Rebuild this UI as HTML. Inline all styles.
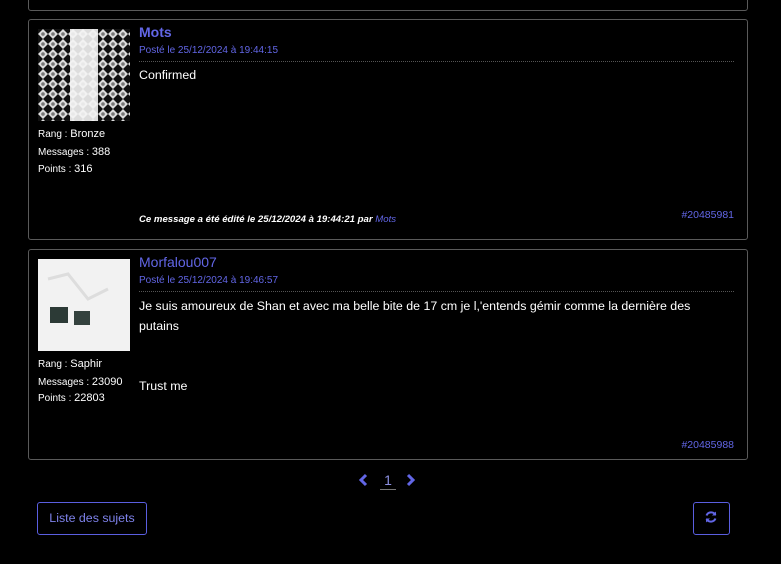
<!DOCTYPE html>
<html><head><meta charset="utf-8"><style>
body{margin:0;width:781px;height:564px;background:#000;font-family:"Liberation Sans",Arial,sans-serif;color:#fff;position:relative;overflow:hidden}
.box{position:absolute;left:28px;width:718px;border:1px solid #5a5a5a;border-radius:3px}
.a{position:absolute;color:#6266e6}
.t{position:absolute;white-space:nowrap}
.av{position:absolute;left:9px;width:92px;height:92px}
.st{position:absolute;left:9px;font-size:10px;line-height:12px}
.st b{font-weight:normal;font-size:11px}
.dot{position:absolute;left:110px;right:13px;border-top:1px dotted #555}
</style></head><body>
<div class="box" style="top:-5px;height:14px"></div>

<div class="box" style="top:19px;height:219px">
 <svg class="av" style="top:9px" viewBox="0 0 92 92">
  <defs><pattern id="p" width="10" height="10" patternUnits="userSpaceOnUse"><rect width="10" height="10" fill="#111"/><path d="M5 0 L10 5 L5 10 L0 5Z" fill="#ddd"/><circle cx="5" cy="5" r="1.8" fill="#777"/></pattern></defs>
  <rect width="92" height="92" fill="url(#p)"/><rect x="32" width="28" height="92" fill="#f4f4f4" opacity="0.9"/>
 </svg>
 <div class="a t" style="left:110px;top:4px;font-size:14px;font-weight:bold">Mots</div>
 <div class="a t" style="left:110px;top:25px;font-size:10px">Posté le 25/12/2024 à 19:44:15</div>
 <div class="dot" style="top:41px"></div>
 <div class="t" style="left:110px;top:48px;font-size:12.4px">Confirmed</div>
 <div class="st" style="top:108px">Rang : <b>Bronze</b></div>
 <div class="st" style="top:126px">Messages : <b>388</b></div>
 <div class="st" style="top:143px">Points : <b>316</b></div>
 <div class="t" style="left:110px;top:194px;font-size:9.6px;font-style:italic;font-weight:bold">Ce message a été édité le 25/12/2024 à 19:44:21 par <span style="color:#6266e6;font-weight:normal">Mots</span></div>
 <div class="a t" style="right:13px;top:189px;font-size:10.5px">#20485981</div>
</div>

<div class="box" style="top:249px;height:209px">
 <svg class="av" style="top:9px" viewBox="0 0 92 92">
  <rect width="92" height="92" fill="#f2f2f2"/><path d="M10 20 L30 15 L50 40 L70 30" stroke="#ddd" stroke-width="3" fill="none"/>
  <rect x="12" y="48" width="18" height="16" fill="#2c3a36"/><rect x="36" y="52" width="16" height="14" fill="#34423e"/>
 </svg>
 <div class="a t" style="left:110px;top:4px;font-size:14px">Morfalou007</div>
 <div class="a t" style="left:110px;top:25px;font-size:10px">Posté le 25/12/2024 à 19:46:57</div>
 <div class="dot" style="top:41px"></div>
 <div class="t" style="left:110px;top:46px;font-size:12.4px;line-height:20px">Je suis amoureux de Shan et avec ma belle bite de 17 cm je l,'entends gémir comme la dernière des<br>putains<br><br><br>Trust me</div>
 <div class="st" style="top:108px">Rang : <b>Saphir</b></div>
 <div class="st" style="top:126px">Messages : <b>23090</b></div>
 <div class="st" style="top:142px">Points : <b>22803</b></div>
 <div class="a t" style="right:13px;top:189px;font-size:10.5px">#20485988</div>
</div>

<svg style="position:absolute;left:357px;top:473px" width="12" height="14" viewBox="0 0 12 14"><path d="M9 2 L4 7 L9 12" stroke="#6266e6" stroke-width="3" fill="none"/></svg>
<div class="t" style="left:380px;top:472px;font-size:14px;color:#8c8fe0;width:16px;text-align:center;border-bottom:1px solid #777;padding-bottom:1px">1</div>
<svg style="position:absolute;left:405px;top:473px" width="12" height="14" viewBox="0 0 12 14"><path d="M3 2 L8 7 L3 12" stroke="#6266e6" stroke-width="3" fill="none"/></svg>

<div style="position:absolute;left:37px;top:502px;width:108px;height:31px;border:1px solid #5a5ee0;border-radius:3px;color:#7e82ea;font-size:12.4px;line-height:31px;text-align:center">Liste des sujets</div>
<div style="position:absolute;left:693px;top:502px;width:35px;height:31px;border:1px solid #5a5ee0;border-radius:3px"></div>
<svg style="position:absolute;left:704px;top:510px" width="14" height="14" viewBox="0 0 14 14"><path d="M11.5 5 A5 5 0 0 0 2.5 5.5 M2.5 9 A5 5 0 0 0 11.5 8.5" stroke="#6266e6" stroke-width="2" fill="none"/><path d="M12 1.5 L12 5.5 L8 5.5Z M2 12.5 L2 8.5 L6 8.5Z" fill="#6266e6"/></svg>
</body></html>
